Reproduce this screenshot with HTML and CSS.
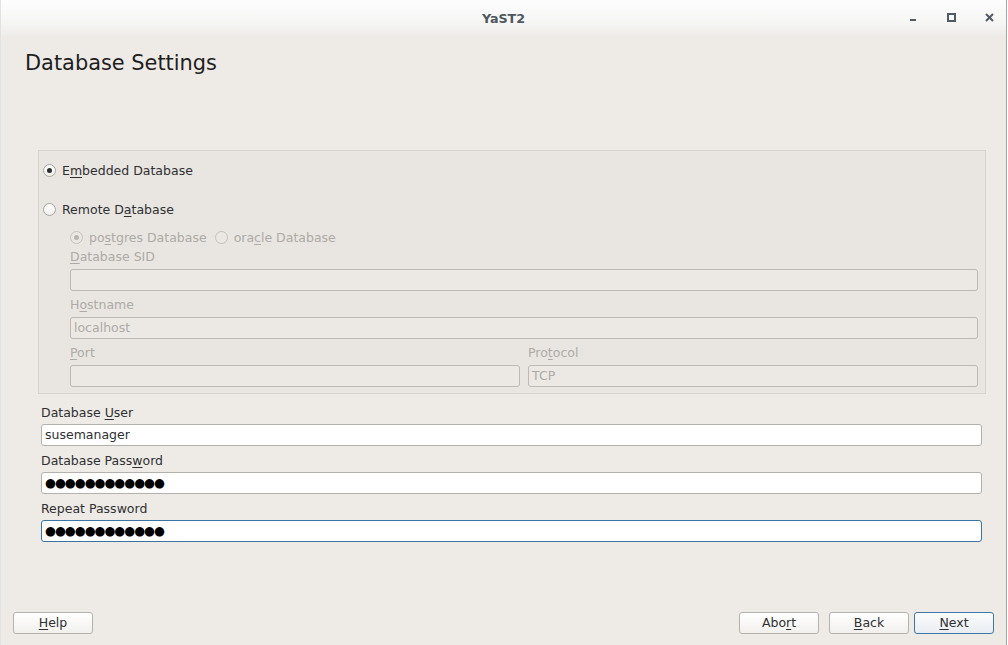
FILE: index.html
```html
<!DOCTYPE html>
<html>
<head>
<meta charset="utf-8">
<link rel="stylesheet" href="styles.css">
</head>
<body>
<div class="window">
  <div class="titlebar">
    <div class="title">YaST2</div>
    <div class="controls">
      <svg class="ctl" width="12" height="12" viewBox="0 0 12 12"><rect x="2" y="7" width="6" height="2" fill="#505b63"/></svg>
      <svg class="ctl" width="12" height="12" viewBox="0 0 12 12"><rect x="2" y="2" width="7" height="7" fill="none" stroke="#505b63" stroke-width="2"/></svg>
      <svg class="ctl" width="12" height="12" viewBox="0 0 12 12"><path d="M2 2 L9 9 M9 2 L2 9" stroke="#505b63" stroke-width="2"/></svg>
    </div>
  </div>
  <div class="content">
    <h1 class="heading">Database Settings</h1>
    <div class="frame">
      <div class="radio-row r1"><span class="radio checked"></span><span>E<u>m</u>bedded Database</span></div>
      <div class="radio-row r2"><span class="radio"></span><span>Remote D<u>a</u>tabase</span></div>
      <div class="sub">
        <div class="radio-row r3 disabled">
          <span class="radio checked dis"></span><span class="opt1">po<u>s</u>tgres Database</span>
          <span class="radio dis"></span><span>ora<u>c</u>le Database</span>
        </div>
        <div class="label disabled"><u>D</u>atabase SID</div>
        <div class="input dis"></div>
        <div class="label disabled">H<u>o</u>stname</div>
        <div class="input dis">localhost</div>
        <div class="two">
          <div class="col">
            <div class="label disabled"><u>P</u>ort</div>
            <div class="input dis"></div>
          </div>
          <div class="col">
            <div class="label disabled">Pro<u>t</u>ocol</div>
            <div class="input dis">TCP</div>
          </div>
        </div>
      </div>
    </div>
    <div class="outer">
      <div class="label first">Database <u>U</u>ser</div>
      <div class="input">susemanager</div>
      <div class="label">Database Pass<u>w</u>ord</div>
      <div class="input dots">●●●●●●●●●●●●</div>
      <div class="label">Repeat Password</div>
      <div class="input dots focus">●●●●●●●●●●●●</div>
    </div>
    <div class="footer">
      <button class="btn"><u>H</u>elp</button>
      <div class="right">
        <button class="btn">Abo<u>r</u>t</button>
        <button class="btn back"><u>B</u>ack</button>
        <button class="btn default"><u>N</u>ext</button>
      </div>
    </div>
  </div>
</div>
</body>
</html>
```

FILE: styles.css
```css
html, body {
  margin: 0;
  padding: 0;
  background: #ffffff;
}
body {
  width: 1008px;
  height: 645px;
  overflow: hidden;
  font-family: "DejaVu Sans", "Liberation Sans", sans-serif;
  font-size: 12.5px;
  color: #2e3032;
}
.window {
  width: 1007px;
  height: 645px;
  display: flex;
  flex-direction: column;
  border-right: 1px solid #a5a5a5;
  border-left: 1px solid #e2e2e2;
  box-sizing: border-box;
  background: #eeebe7;
}
.titlebar {
  height: 37px;
  flex: none;
  position: relative;
  display: flex;
  align-items: center;
  justify-content: center;
  background: linear-gradient(#fdfdfd, #f6f6f5 60%, #eeebe7);
}
.title {
  font-weight: bold;
  font-size: 12.7px;
  color: #4f585f;
}
.controls {
  position: absolute;
  right: 10px;
  top: 12px;
  display: flex;
  gap: 26px;
}
.ctl { display: block; }
.content {
  flex: 1;
  display: flex;
  flex-direction: column;
}
.heading {
  margin: 13px 0 0 24px;
  font-size: 20.9px;
  font-weight: normal;
  line-height: 26px;
  color: #1e1e1e;
}
.frame {
  margin: 74px 0 0 37px;
  width: 948px;
  box-sizing: border-box;
  border: 1px solid #d7d4cf;
  background: #e9e6e2;
  padding: 9px 7px 6px 4px;
}
.radio-row {
  display: flex;
  align-items: center;
  height: 20px;
  gap: 6px;
}
.r2 { margin-top: 19px; }
.sub {
  padding-left: 27px;
  margin-top: 8px;
}
.r3 .opt1 { margin-right: 2px; }
.radio {
  width: 11px;
  height: 11px;
  border-radius: 50%;
  border: 1px solid #a9a6a1;
  background: linear-gradient(#ffffff, #f1efec);
  position: relative;
  flex: none;
}
.radio.checked::after {
  content: "";
  position: absolute;
  left: 3px;
  top: 3px;
  width: 5px;
  height: 5px;
  border-radius: 50%;
  background: #2f2f2f;
}
.radio.dis {
  border-color: #c4c0bb;
  background: #ebe8e4;
}
.radio.dis.checked::after { background: #b8b4af; }
.disabled { color: #aeaaa5; }
.label {
  height: 18px;
  line-height: 18px;
  margin-top: 1px;
}
.sub .input + .label, .sub .two { margin-top: 5px; }
.input {
  height: 22px;
  box-sizing: border-box;
  border: 1px solid #b4b1ac;
  border-radius: 3px;
  background: #ffffff;
  margin-top: 3px;
  padding: 0 3px;
  line-height: 20px;
  white-space: nowrap;
  overflow: hidden;
}
.input.dis {
  background: #ece9e5;
  border-color: #bdb9b4;
  color: #aeaaa5;
}
.two {
  display: grid;
  grid-template-columns: 450px 450px;
  column-gap: 8px;
}
.two .label { margin-top: 0; }
.outer {
  margin-left: 40px;
  width: 941px;
}
.outer .label { margin-top: 6px; }
.outer .label.first { margin-top: 10px; }
.outer .input { margin-top: 2px; }
.dots {
  font-size: 12.5px;
  letter-spacing: -1px;
  color: #000;
}
.focus {
  border-color: #3b74a4;
}
.footer {
  margin-top: auto;
  display: flex;
  justify-content: space-between;
  align-items: center;
  padding: 0 12px 11px 12px;
}
.right {
  display: flex;
  gap: 10px;
}
.btn {
  width: 80px;
  height: 22px;
  box-sizing: border-box;
  border: 1px solid #b6b3ae;
  border-radius: 3px;
  background: linear-gradient(#ffffff, #f2f0ed);
  font-family: "DejaVu Sans", "Liberation Sans", sans-serif;
  font-size: 12.5px;
  color: #2e3032;
  padding: 0;
  line-height: 20px;
}
.btn.back { margin-right: -5px; }
.btn.default {
  border-color: #3d78a8;
  background: linear-gradient(#fbfcfd, #e9edf1);
}
u { text-underline-offset: 2px; }
```
